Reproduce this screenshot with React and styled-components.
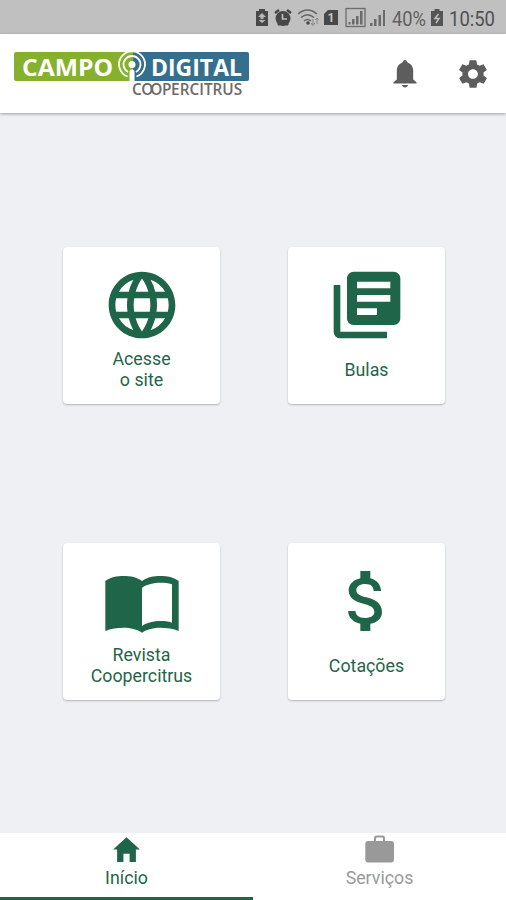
import React, { useState } from 'react';
import styled, { createGlobalStyle } from 'styled-components';
import { MdLanguage, MdLibraryBooks, MdAttachMoney } from 'react-icons/md';
import { IoMdSettings, IoMdHome } from 'react-icons/io';

const GlobalStyle = createGlobalStyle`
  * {
    box-sizing: border-box;
  }

  body {
    margin: 0;
    font-family: Roboto, "Liberation Sans", sans-serif;
  }

  button {
    border: none;
    padding: 0;
    font: inherit;
    cursor: pointer;
  }

  svg {
    display: block;
    flex-shrink: 0;
  }
`;

// Styled Components
const Screen = styled.div`
  display: flex;
  flex-direction: column;
  width: 100%;
  height: 100vh;
  background-color: #eef0f4;
  overflow: hidden;
`;

const StatusBar = styled.div`
  display: flex;
  justify-content: flex-end;
  height: 34px;
  background-color: #c0c0c0;
`;

const Header = styled.header`
  display: flex;
  align-items: center;
  justify-content: space-between;
  height: 79px;
  padding: 0 16px 0 14px;
  background-color: #fff;
  box-shadow: 0 1px 3px rgba(0, 0, 0, 0.35);
  z-index: 1;
`;

const HeaderActions = styled.div`
  display: flex;
  gap: 34px;
`;

const IconButton = styled.button`
  background: none;
  color: #5d5d5d;
  font-size: 34px;
`;

const CardGrid = styled.main`
  flex-grow: 1;
  display: grid;
  grid-template-columns: 157px 157px;
  grid-template-rows: 157px 157px;
  gap: 139px 68px;
  padding: 134px 61px 0 63px;
`;

const Card = styled.button`
  display: flex;
  flex-direction: column;
  align-items: center;
  padding-top: 18px;
  border-radius: 4px;
  background-color: #fff;
  color: #1f6549;
  box-shadow: 0 1px 2px rgba(0, 0, 0, 0.25);
`;

const CardLabel = styled.span`
  display: flex;
  align-items: center;
  height: 44px;
  margin-top: 2px;
  font-size: 17.8px;
  line-height: 21px;
  text-align: center;
  white-space: pre-line;
`;

const TabBar = styled.nav`
  display: flex;
  height: 67px;
  background-color: #fff;
`;

const Tab = styled.button`
  flex: 1;
  display: flex;
  flex-direction: column;
  align-items: center;
  justify-content: flex-start;
  background: none;
  color: ${props => (props.$active ? '#1f6549' : '#999')};
  border-bottom: 3px solid ${props => (props.$active ? '#1f6549' : 'transparent')};
  font-size: 17.8px;
  line-height: 23px;

  svg {
    width: 33px;
    height: 33px;
  }
`;

const LogoImage = styled.svg`
  width: 236px;
  height: 54px;
  margin-top: 6px;
  font-family: "Open Sans", "Noto Sans", sans-serif;
`;

function Logo() {
  return (
    <LogoImage viewBox="14 50 236 54">
      <path d="M16 52H134V81H16Q14 81 14 79V54Q14 52 16 52Z" fill="#86b12d" />
      <path d="M133 52H247Q249 52 249 54V79Q249 81 247 81H133Z" fill="#34708e" />
      <text x="22" y="76" fontSize="24" fontWeight="700" fill="#fff" textLength="91" lengthAdjust="spacingAndGlyphs">CAMPO</text>
      <text x="151" y="76" fontSize="24" fontWeight="700" fill="#fff" textLength="91" lengthAdjust="spacingAndGlyphs">DIGITAL</text>
      <g fill="none" stroke="#fff" strokeWidth="1.8">
        <path d="M127.5 76.5A13 13 0 1 1 136.5 76.5" />
        <path d="M128 72A8.5 8.5 0 1 1 136 72" />
      </g>
      <circle cx="132" cy="64.5" r="3.5" fill="#fff" />
      <path d="M129.5 82V71Q132 67.5 134.5 71V82Z" fill="#fff" />
      <g transform="translate(132 95.3) scale(0.96 1)">
        <text fontSize="16" fontWeight="600" fill="#6c6a6b" dx="0 -0.6 -3.2 -0.3 -0.3">COOPERCITRUS</text>
      </g>
    </LogoImage>
  );
}

function BellIcon() {
  return (
    <svg width="34" height="34" viewBox="0 0 34 34" fill="currentColor">
      <path d="M17 3C18.300 3 18.700 4.300 19.600 5.500C23.500 7 25.200 10 25.200 14V22.500L28.500 25.200V26.500H5.500V25.200L8.800 22.500V14C8.800 10 10.500 7 14.400 5.500C15.300 4.300 15.700 3 17 3Z" />
      <path d="M14 28H20C19.800 29.600 18.600 30.500 17 30.500S14.200 29.600 14 28Z" />
    </svg>
  );
}

function BriefcaseIcon() {
  return (
    <svg viewBox="0 0 33 33" fill="currentColor">
      <path
        fillRule="evenodd"
        d="M5 8H11V5Q11 2.500 13.500 2.500H19.500Q22 2.500 22 5V8H28.200Q31 8 31 11V26.500Q31 29.500 28.200 29.500H5Q2.300 29.500 2.300 26.500V11Q2.300 8 5 8ZM13 8H20V5.800Q20 4.600 18.800 4.600H14.200Q13 4.600 13 5.800Z"
      />
    </svg>
  );
}

function OpenBookIcon() {
  return (
    <svg width="80" height="80" viewBox="0 0 24 24" fill="currentColor">
      <path
        fillRule="evenodd"
        d="M1 6C2.45 4.9 4.55 4.5 6.5 4.5S10.55 4.9 12 6C13.45 4.9 15.55 4.5 17.5 4.5S21.6 4.9 23 6V21C21.5 20.3 19.3 20 17.5 20C15.6 20 13.4 20.5 12 21.5C10.6 20.5 8.4 20 6.5 20C4.7 20 2.5 20.3 1 21ZM12 8V19.5C13.4 18.5 15.6 18 17.5 18C18.7 18 19.9 18.1 21 18.5V7C19.9 6.6 18.7 6.5 17.5 6.5C15.6 6.5 13.4 7 12 8Z"
      />
    </svg>
  );
}

// Notification icons, signal, battery and clock
function StatusIcons() {
  return (
    <svg width="252" height="34" viewBox="254 0 252 34" fill="#484848">
      <path d="M259 9H265V11H268V26H256V11H259Z" />
      <path d="M262 13L266 17H263.5V19H260.5V17H258ZM258.5 20L262 23L265.5 20" fill="#b5b5b5" />
      <circle cx="283" cy="18.5" r="7.5" />
      <path d="M275 13L279 10M291 13L287 10M278 25L280 23M288 25L286 23" stroke="#484848" strokeWidth="2.5" />
      <path d="M282.5 14V19H287" fill="none" stroke="#c0c0c0" strokeWidth="1.6" />
      <g fill="none" stroke="#666" strokeWidth="1.6">
        <path d="M298 14Q307.500 6 317 14M301 17.500Q307.500 12 314 17.500M304 21Q307.500 18 311 21" />
      </g>
      <circle cx="308" cy="23" r="1.8" />
      <path d="M313 19V25M311 23L313 25.500L315 23M317 24V18M315.500 20L317 18L318.500 20" fill="none" stroke="#888" />
      <path d="M328 10H338V25H324V14Z" />
      <text x="331" y="22" fontSize="12" fontWeight="700" fill="#c8c8c8" textAnchor="middle">1</text>
      <rect x="346" y="8.500" width="19" height="18" fill="none" stroke="#6b6b6b" strokeWidth="1.3" />
      <g fill="#6b6b6b">
        <path d="M348.500 22H350.500V24.500H348.500ZM352 19H354.500V24.500H352ZM356 16H358.500V24.500H356ZM360 11H362.500V24.500H360Z" />
        <path d="M370 23H372.500V26H370ZM374 19H376.500V26H374ZM378.500 15H381V26H378.500ZM383 10H385V26H383Z" />
      </g>
      <text x="392" y="26" fontSize="20" fill="#606060" textLength="34" lengthAdjust="spacingAndGlyphs">40%</text>
      <path d="M434.500 9H439.500V11H443V26H431V11H434.500Z" fill="#555" />
      <path d="M438.500 14L435 18.500H439L436 23" fill="none" stroke="#c0c0c0" strokeWidth="1.5" />
      <text x="449" y="26" fontSize="20" fill="#505050" textLength="46" lengthAdjust="spacingAndGlyphs">10:50</text>
    </svg>
  );
}

const cards = [
  { label: 'Acesse\no site', icon: <MdLanguage size={80} /> },
  { label: 'Bulas', icon: <MdLibraryBooks size={80} /> },
  { label: 'Revista\nCoopercitrus', icon: <OpenBookIcon /> },
  { label: 'Cotações', icon: <MdAttachMoney size={80} /> },
];

const tabs = [
  { label: 'Início', icon: <IoMdHome /> },
  { label: 'Serviços', icon: <BriefcaseIcon /> },
];

function App() {
  const [activeTab, setActiveTab] = useState(0);

  return (
    <Screen>
      <GlobalStyle />
      <StatusBar>
        <StatusIcons />
      </StatusBar>

      <Header>
        <Logo />
        <HeaderActions>
          <IconButton><BellIcon /></IconButton>
          <IconButton><IoMdSettings /></IconButton>
        </HeaderActions>
      </Header>

      <CardGrid>
        {cards.map((card) => (
          <Card key={card.label}>
            {card.icon}
            <CardLabel>{card.label}</CardLabel>
          </Card>
        ))}
      </CardGrid>

      <TabBar>
        {tabs.map((tab, index) => (
          <Tab key={tab.label} $active={index === activeTab} onClick={() => setActiveTab(index)}>
            {tab.icon}
            {tab.label}
          </Tab>
        ))}
      </TabBar>
    </Screen>
  );
}

export default App;
